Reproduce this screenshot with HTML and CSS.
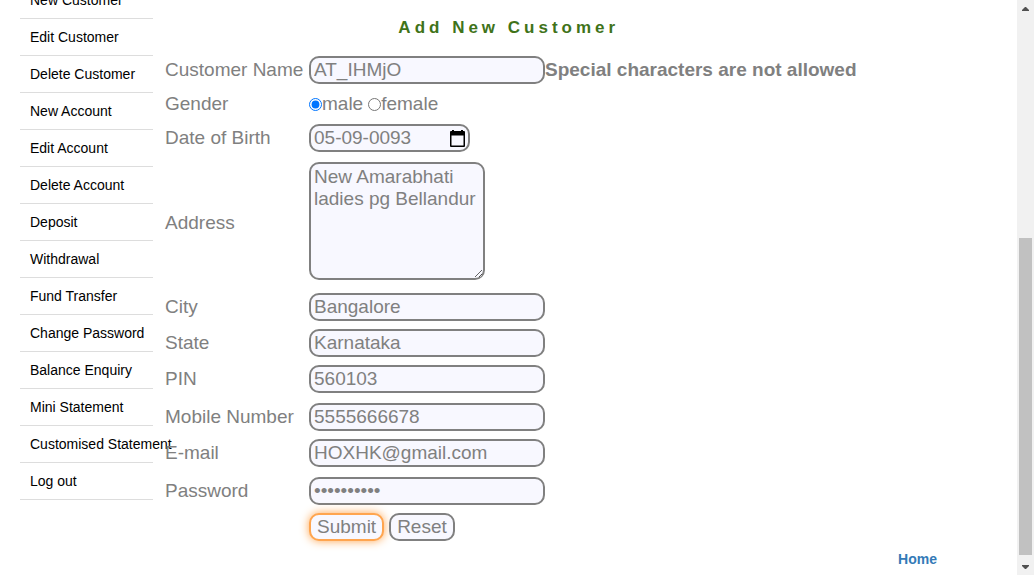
FILE: index.html
```html
<!DOCTYPE html>
<html lang="en">
<head>
<meta charset="utf-8">
<title>Add New Customer</title>
<link rel="stylesheet" href="styles.css">
</head>
<body>
<div class="page">
  <nav class="menu">
    <ul class="menu-list">
      <li><a href="#">New Customer</a></li>
      <li><a href="#">Edit Customer</a></li>
      <li><a href="#">Delete Customer</a></li>
      <li><a href="#">New Account</a></li>
      <li><a href="#">Edit Account</a></li>
      <li><a href="#">Delete Account</a></li>
      <li><a href="#">Deposit</a></li>
      <li><a href="#">Withdrawal</a></li>
      <li><a href="#">Fund Transfer</a></li>
      <li><a href="#">Change Password</a></li>
      <li><a href="#">Balance Enquiry</a></li>
      <li><a href="#">Mini Statement</a></li>
      <li><a href="#">Customised Statement</a></li>
      <li><a href="#">Log out</a></li>
    </ul>
  </nav>
  <main class="content">
    <form class="form">
      <h1 class="title">Add New Customer</h1>
      <div class="row">
        <label for="name">Customer Name</label>
        <div class="field"><input class="box" id="name" type="text" value="AT_IHMjO"><strong>Special characters are not allowed</strong></div>
      </div>
      <div class="row row-gender">
        <span>Gender</span>
        <div class="field">
          <input class="radio" id="male" type="radio" name="gender" checked><label for="male">male</label>
          <input class="radio radio-next" id="female" type="radio" name="gender"><label for="female">female</label>
        </div>
      </div>
      <div class="row">
        <label for="dob">Date of Birth</label>
        <div class="field">
          <div class="box date">
            <input class="date-text" id="dob" type="text" value="05-09-0093">
            <button class="date-button" type="button" aria-label="Choose date">
              <svg width="15" height="17" viewBox="0 0 15 17"><path fill="#000" fill-rule="evenodd" d="M2 0h2v1h7V0h2v1h1q1 0 1 1v14q0 1-1 1H1q-1 0-1-1V2q0-1 1-1h1zM1.5 5.5v10h12v-10z"/></svg>
            </button>
          </div>
        </div>
      </div>
      <div class="row row-address">
        <label for="address">Address</label>
        <div class="field field-area"><textarea class="box area" id="address">New Amarabhati ladies pg Bellandur</textarea></div>
      </div>
      <div class="row">
        <label for="city">City</label>
        <div class="field"><input class="box" id="city" type="text" value="Bangalore"></div>
      </div>
      <div class="row">
        <label for="state">State</label>
        <div class="field"><input class="box" id="state" type="text" value="Karnataka"></div>
      </div>
      <div class="row">
        <label for="pin">PIN</label>
        <div class="field"><input class="box" id="pin" type="text" value="560103"></div>
      </div>
      <div class="row row-tall">
        <label for="mobile">Mobile Number</label>
        <div class="field"><input class="box" id="mobile" type="text" value="5555666678"></div>
      </div>
      <div class="row">
        <label for="email">E-mail</label>
        <div class="field"><input class="box" id="email" type="text" value="HOXHK@gmail.com"></div>
      </div>
      <div class="row row-tall">
        <label for="password">Password</label>
        <div class="field"><input class="box" id="password" type="password" value="abcdefghij"></div>
      </div>
      <div class="row">
        <span></span>
        <div class="field buttons">
          <button class="box button submit" type="submit">Submit</button>
          <button class="box button" type="reset">Reset</button>
        </div>
      </div>
    </form>
    <footer class="footer"><a href="#">Home</a></footer>
  </main>
  <div class="scrollbar" aria-hidden="true">
    <svg width="17" height="17" viewBox="0 0 17 17"><path fill="#505050" d="M5 11V10L8 7h1l3 3v1z"/></svg>
    <div class="track"><div class="thumb"></div></div>
    <svg width="17" height="17" viewBox="0 0 17 17"><path fill="#505050" d="M5 7v1l3 3h1l3-3V7z"/></svg>
  </div>
</div>
</body>
</html>
```
FILE: styles.css
```css
* {
  box-sizing: border-box;
}

body {
  margin: 0;
  background: #fff;
  color: #808080;
  font: 19px/22px "Liberation Sans", Arial, sans-serif;
}

.page {
  display: flex;
  height: 100vh;
  overflow: hidden;
}

.menu {
  flex: 0 0 133px;
  min-width: 0;
  margin-left: 20px;
}

.menu-list {
  margin: -18px 0 0;
  padding: 0;
  list-style: none;
  font-size: 14px;
}

.menu-list li {
  height: 37px;
  padding: 0 10px;
  border-bottom: 1px solid #ddd;
  line-height: 36px;
  white-space: nowrap;
}

.menu-list a {
  color: #000;
  text-decoration: none;
}

.content {
  flex: 1;
  min-width: 0;
  padding-left: 12px;
}

.form {
  width: fit-content;
}

.title {
  margin: 0;
  padding: 17px 4px 13px 0;
  color: #3f731a;
  font-size: 17px;
  line-height: 22px;
  letter-spacing: 4px;
  text-align: center;
}

.row {
  display: grid;
  grid-template-columns: 144px auto;
  align-items: center;
  min-height: 36px;
}

.row-gender {
  min-height: 32px;
}

.row-address {
  min-height: 133px;
}

.row-tall {
  min-height: 38px;
  padding-top: 2px;
}

.field {
  display: flex;
  align-items: center;
  white-space: nowrap;
}

.field-area {
  padding-bottom: 4px;
  white-space: normal;
}

.box {
  width: 236px;
  height: 28px;
  margin: 0;
  padding: 0 3px;
  border: 2px solid #808080;
  border-radius: 10px;
  outline: none;
  background: #f8f8ff;
  color: #808080;
  font: inherit;
}

.date {
  display: flex;
  align-items: center;
  width: 161px;
}

.date-text {
  flex: 1;
  min-width: 0;
  padding: 0;
  border: 0;
  outline: none;
  background: none;
  color: inherit;
  font: inherit;
}

.date-button {
  display: flex;
  padding: 0;
  border: 0;
  background: none;
}

.area {
  width: 176px;
  height: 118px;
  padding: 2px 3px;
  resize: both;
}

.radio {
  width: 13px;
  height: 13px;
  margin: 0;
}

.radio-next {
  margin-left: 5px;
}

.buttons {
  gap: 5px;
}

.button {
  width: auto;
  padding: 0 6px;
}

.submit {
  border-color: #ffa54f;
  box-shadow: 0 0 10px #ffa54f;
}

.footer {
  padding: 3px 80px 0 0;
  font-size: 14px;
  font-weight: bold;
  text-align: right;
}

.footer a {
  color: #337ab7;
  text-decoration: none;
}

.scrollbar {
  display: flex;
  flex: 0 0 17px;
  flex-direction: column;
  background: #f1f1f1;
}

.track {
  display: flex;
  flex: 1;
  flex-direction: column;
  justify-content: flex-end;
  padding: 0 2px 3px;
}

.thumb {
  height: 59%;
  background: #c1c1c1;
}
```
